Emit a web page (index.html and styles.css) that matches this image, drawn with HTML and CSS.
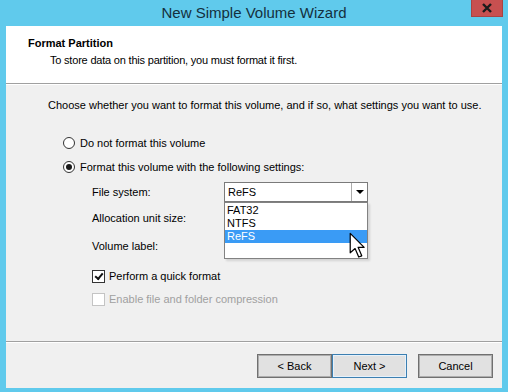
FILE: index.html
```html
<!DOCTYPE html>
<html lang="en">
<head>
<meta charset="UTF-8">
<title>New Simple Volume Wizard</title>
<link rel="stylesheet" href="styles.css">
</head>
<body>
<div class="window">
  <div class="titlebar">
    <span></span>
    <span class="title">New Simple Volume Wizard</span>
    <span class="close-wrap">
      <span class="close">
        <svg width="12" height="10" viewBox="0 0 12 10"><path d="M2 1 L10 9 M10 1 L2 9" stroke="#1b1b1b" stroke-width="2.4" fill="none"/></svg>
      </span>
    </span>
  </div>

  <div class="client">
    <div class="header">
      <div class="header-title">Format Partition</div>
      <div class="header-sub">To store data on this partition, you must format it first.</div>
    </div>

    <div class="main">
      <p class="intro">Choose whether you want to format this volume, and if so, what settings you want to use.</p>

      <div class="option opt-first"><span class="radio"></span>Do not format this volume</div>
      <div class="option opt-second"><span class="radio checked"></span>Format this volume with the following settings:</div>

      <div class="settings">
        <div class="field field-fs">
          <span class="field-label">File system:</span>
          <div class="select">
            <span class="select-value">ReFS</span>
            <span class="select-arrow"></span>
            <ul class="dropdown">
              <li>FAT32</li>
              <li>NTFS</li>
              <li class="selected">ReFS</li>
              <svg class="cursor" width="17" height="27" viewBox="0 0 14 22"><path d="M1 1 L1 17 L5 13.5 L8 20.5 L10.5 19.5 L7.5 12.5 L12.5 12.5 Z" fill="#fff" stroke="#000" stroke-width="1" stroke-linejoin="round"/></svg>
            </ul>
          </div>
        </div>
        <div class="field field-alloc"><span class="field-label">Allocation unit size:</span></div>
        <div class="field field-label-row"><span class="field-label">Volume label:</span></div>

        <div class="check-row check-first"><span class="checkbox checked"></span>Perform a quick format</div>
        <div class="check-row disabled"><span class="checkbox"></span>Enable file and folder compression</div>
      </div>
    </div>

    <div class="footer">
      <div class="btn-pair">
        <button class="btn">&lt; Back</button>
        <button class="btn btn-default">Next &gt;</button>
      </div>
      <button class="btn btn-cancel">Cancel</button>
    </div>
  </div>
</div>
</body>
</html>
```

FILE: styles.css
```css
:root {
  --cor-moldura: #60caec;
  --cor-fundo: #f0f0f0;
  --cor-borda: #a0a0a0;
  --cor-selecao: #3a9bf5;
}

body {
  margin: 0;
  background: var(--cor-moldura);
  font-family: 'Liberation Sans', Arial, sans-serif;
  font-size: 11px;
  color: #000;
}

.window {
  width: 508px;
  height: 392px;
  background: var(--cor-moldura);
}

.titlebar {
  height: 26px;
  display: grid;
  grid-template-columns: 1fr auto 1fr;
}

.title {
  font-size: 15px;
  color: #14303e;
  line-height: 25px;
}

.close-wrap {
  display: flex;
  justify-content: flex-end;
  padding-right: 5px;
}

.close {
  width: 32px;
  height: 17px;
  background: #c75050;
  border: 1px solid #a84343;
  border-top: none;
  box-sizing: border-box;
  display: flex;
  justify-content: center;
  align-items: center;
}

.client {
  margin: 0 6px;
  height: 362px;
  background: var(--cor-fundo);
  display: flex;
  flex-direction: column;
}

.header {
  height: 58px;
  box-sizing: border-box;
  background: #fff;
  border-bottom: 1px solid var(--cor-borda);
  box-shadow: 0 1px 0 #fff;
  padding: 10px 0 0 22px;
  line-height: 14px;
}

.header-title {
  font-weight: bold;
}

.header-sub {
  margin-top: 3px;
  padding-left: 22px;
  letter-spacing: -0.2px;
}

.main {
  flex: 1;
  line-height: 14px;
  padding-top: 1px;
}

.intro {
  margin: 13px 0 0 42px;
}

.option {
  height: 20px;
  display: flex;
  align-items: center;
  margin-left: 57px;
}

.opt-first {
  margin-top: 21px;
}

.opt-second {
  margin-top: 4px;
}

.radio {
  width: 12px;
  height: 12px;
  border: 1px solid #333;
  border-radius: 50%;
  background: #fff;
  box-sizing: border-box;
  margin-right: 5px;
  display: flex;
  justify-content: center;
  align-items: center;
}

.radio.checked::after {
  content: "";
  width: 6px;
  height: 6px;
  border-radius: 50%;
  background: #1a1a1a;
}

.settings {
  margin-left: 86px;
}

.field {
  height: 20px;
  display: flex;
  align-items: center;
}

.field-fs {
  margin-top: 5px;
}

.field-alloc {
  margin-top: 6px;
}

.field-label-row {
  margin-top: 8px;
}

.field-label {
  width: 132px;
}

.select {
  position: relative;
  width: 144px;
  height: 20px;
  box-sizing: border-box;
  border: 1px solid #7a7a7a;
  background: #fff;
  display: flex;
}

.select-value {
  flex: 1;
  padding-left: 3px;
  line-height: 18px;
}

.select-arrow {
  width: 15px;
  border-left: 1px solid #ababab;
  display: flex;
  justify-content: center;
  align-items: center;
}

.select-arrow::after {
  content: "";
  border-left: 4px solid transparent;
  border-right: 4px solid transparent;
  border-top: 4px solid #000;
}

.dropdown {
  position: absolute;
  top: 19px;
  left: -1px;
  width: 144px;
  height: 57px;
  box-sizing: border-box;
  margin: 0;
  padding: 1px 0 0;
  list-style: none;
  background: #fff;
  border: 1px solid #828282;
  box-shadow: 2px 2px 2px rgba(0, 0, 0, 0.12);
}

.dropdown li {
  height: 13px;
  line-height: 13px;
  padding-left: 2px;
}

.dropdown li.selected {
  background: var(--cor-selecao);
  color: #fff;
}

.cursor {
  position: absolute;
  left: 124px;
  top: 29px;
}

.check-row {
  height: 20px;
  display: flex;
  align-items: center;
}

.check-first {
  margin-top: 10px;
}

.check-row.disabled {
  margin-top: 3px;
  color: #a0a0a0;
}

.checkbox {
  width: 13px;
  height: 13px;
  box-sizing: border-box;
  border: 1px solid #333;
  background: #fff;
  margin-right: 4px;
  display: flex;
  justify-content: center;
  align-items: center;
}

.checkbox.checked::after {
  content: "";
  width: 6px;
  height: 3px;
  border-left: 2px solid #111;
  border-bottom: 2px solid #111;
  transform: rotate(-50deg);
  margin-top: -2px;
}

.check-row.disabled .checkbox {
  border-color: #c4c4c4;
}

.footer {
  height: 47px;
  box-sizing: border-box;
  border-top: 1px solid var(--cor-borda);
  box-shadow: inset 0 1px 0 #fff;
  padding: 12px 9px 0 0;
  display: flex;
  justify-content: flex-end;
  align-items: flex-start;
}

.btn-pair {
  display: flex;
}

.btn {
  width: 75px;
  height: 24px;
  box-sizing: border-box;
  border: 1px solid #707070;
  background: #e1e1e1;
  font-family: 'Liberation Sans', Arial, sans-serif;
  font-size: 11px;
  color: #000;
  padding: 0;
  box-shadow: inset 0 0 0 1px #adadad;
}

.btn-default {
  border: 1px solid #3c7fb1;
  box-shadow: inset 0 0 0 1px #e5f1fb;
}

.btn-cancel {
  margin-left: 11px;
}
```
